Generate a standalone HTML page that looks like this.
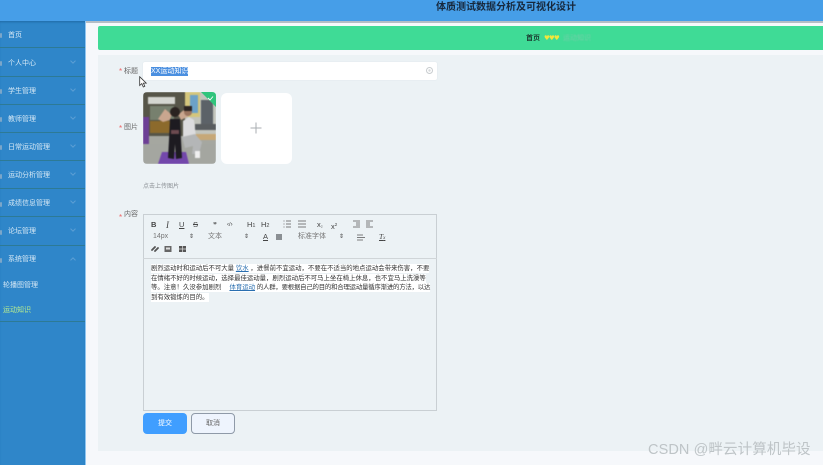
<!DOCTYPE html>
<html lang="zh">
<head>
<meta charset="utf-8">
<title>体质测试数据分析及可视化设计</title>
<style>
html,body{margin:0;padding:0}
body{width:823px;height:465px;overflow:hidden;position:relative;background:#f6f8fb;font-family:"Liberation Sans","Noto Sans CJK SC",sans-serif;color:#555}
.a{position:absolute;white-space:nowrap}
#top{left:0;top:0;width:823px;height:21px;background:#469ee8;border-bottom:2px solid #b4bec6}
#title{left:0;top:1px;width:1012px;text-align:center;font-size:10px;line-height:13px;font-weight:bold;color:#17283c;filter:blur(.2px)}
#side{left:0;top:21px;width:85px;height:444px;background:#2f86c9;border-right:1px solid #8fc6f2;box-shadow:inset 0 2px 2px -1px #1f6aa5}
.mi{left:0;width:85px;height:1px;background:#2d7a95}
.mt{left:8px;margin-top:1px;font-size:7px;line-height:10px;color:#d6e8f5;filter:blur(.35px)}
.ic{left:0;width:2px;height:5px;background:#7ba6c9;border-radius:1px;filter:blur(.3px)}
.ch{left:71px;width:3px;height:3px;border-right:1px solid #5b9fd4;border-bottom:1px solid #5b9fd4;transform:rotate(45deg);filter:blur(.2px)}
.ch.up{transform:rotate(225deg)}
#green{left:98px;top:26px;width:725px;height:24px;background:#3fdb96;border-radius:2px 0 0 2px}
#card{left:98px;top:55px;width:725px;height:396px;background:#ecf2f5}
.lb{margin-top:1px;font-size:7px;line-height:10px;color:#666;filter:blur(.3px)}
.st{color:#e66;font-size:8px;line-height:10px;filter:blur(.2px)}
#inp{left:143px;top:62px;width:294px;height:18px;background:#fff;border-radius:2px;box-shadow:0 0 1px #d5dde2}
#sel{left:151px;top:67px;height:9px;background:#4a8fe0;color:#fff;font-size:7px;line-height:9px;filter:blur(.3px)}
#photo{left:143px;top:92px;width:73px;height:72px;border-radius:4px;overflow:hidden}
#photo svg{display:block;filter:blur(.6px)}
#plus{left:221px;top:93px;width:71px;height:71px;background:#fff;border-radius:6px}
#editor{left:143px;top:214px;width:294px;height:197px;border:1px solid #c9cfd3;box-sizing:border-box}
#tbar{left:143px;top:258px;width:294px;height:1px;background:#d0d5d8}
.tb{margin-top:1px;font-size:7.5px;line-height:10px;color:#444;filter:blur(.25px)}
.t2{color:#777;font-size:7px}
.ln{left:151px;font-size:6.4px;line-height:9px;height:9px;color:#333;background:#fff;filter:blur(.3px)}
.ln u{color:#2a6fb0}
#ok{left:143px;top:413px;width:44px;height:21px;background:#409eff;border-radius:4px;color:#fff;font-size:7px;line-height:21px;text-align:center;filter:blur(.2px)}
#no{left:191px;top:413px;width:44px;height:21px;box-sizing:border-box;background:#eef4fd;border:1px solid #8f9aa8;border-radius:4px;color:#666;font-size:7px;line-height:19px;text-align:center}
#wm{left:648px;top:442px;font-size:14.5px;line-height:17px;color:#bec4c7;letter-spacing:.1px}
</style>
</head>
<body>
<div class="a" id="top"></div>
<div class="a" id="title">体质测试数据分析及可视化设计</div>

<div class="a" id="side"></div>
<div class="a mi" style="top:47px"></div>
<div class="a mi" style="top:76px"></div>
<div class="a mi" style="top:104px"></div>
<div class="a mi" style="top:132px"></div>
<div class="a mi" style="top:160px"></div>
<div class="a mi" style="top:188px"></div>
<div class="a mi" style="top:216px"></div>
<div class="a mi" style="top:245px"></div>
<div class="a mi" style="top:321px"></div>
<div class="a ic" style="top:33px"></div>
<div class="a ic" style="top:61px"></div>
<div class="a ic" style="top:89px"></div>
<div class="a ic" style="top:117px"></div>
<div class="a ic" style="top:145px"></div>
<div class="a ic" style="top:174px"></div>
<div class="a ic" style="top:202px"></div>
<div class="a ic" style="top:230px"></div>
<div class="a ic" style="top:258px"></div>
<div class="a mt" style="top:30px">首页</div>
<div class="a mt" style="top:58px">个人中心</div>
<div class="a mt" style="top:86px">学生管理</div>
<div class="a mt" style="top:114px">教师管理</div>
<div class="a mt" style="top:142px">日常运动管理</div>
<div class="a mt" style="top:170px">运动分析管理</div>
<div class="a mt" style="top:198px">成绩信息管理</div>
<div class="a mt" style="top:226px">论坛管理</div>
<div class="a mt" style="top:254px">系统管理</div>
<div class="a mt" style="top:280px;left:3px">轮播图管理</div>
<div class="a mt" style="top:305px;left:3px;color:#b9ee8f">运动知识</div>
<div class="a ch" style="top:59px"></div>
<div class="a ch" style="top:87px"></div>
<div class="a ch" style="top:115px"></div>
<div class="a ch" style="top:143px"></div>
<div class="a ch" style="top:171px"></div>
<div class="a ch" style="top:199px"></div>
<div class="a ch" style="top:227px"></div>
<div class="a ch up" style="top:258px"></div>

<div class="a" id="green"></div>
<div class="a" style="left:526px;top:34px;font-size:7px;line-height:10px;color:#1c3a30;font-weight:bold">首页</div>
<div class="a" style="left:544px;top:34px;font-size:6.5px;line-height:8px;color:#f3e63c;letter-spacing:-.9px;font-family:'DejaVu Sans',sans-serif">♥♥♥</div>
<div class="a" style="left:563px;top:34px;font-size:7px;line-height:10px;color:#72cfa8;filter:blur(.4px)">运动知识</div>

<div class="a" id="card"></div>

<div class="a st" style="left:119px;top:67px">*</div>
<div class="a lb" style="left:124px;top:66px">标题</div>
<div class="a" id="inp"></div>
<div class="a" id="sel">XX运动知识</div>
<svg class="a" style="left:425px;top:66px" width="9" height="9" viewBox="0 0 9 9"><circle cx="4.5" cy="4.5" r="3" fill="none" stroke="#c8cccf"/><circle cx="4.5" cy="4.5" r="1.2" fill="#d5d8da"/></svg>
<svg class="a" style="left:139px;top:76px" width="9" height="12" viewBox="0 0 9 12"><path d="M.7.7V9.5L2.8 7.6 4.3 11 5.8 10.3 4.4 7.1H7.2Z" fill="#fff" stroke="#333" stroke-width=".8"/></svg>

<div class="a st" style="left:119px;top:124px">*</div>
<div class="a lb" style="left:124px;top:122px">图片</div>
<div class="a" id="photo">
<svg width="73" height="72" viewBox="0 0 73 72">
<rect width="73" height="72" fill="#a5a7a0"/>
<rect width="42" height="44" fill="#565548"/>
<rect x="5" y="5" width="27" height="7" fill="#d4d6d0"/>
<rect x="7" y="14" width="24" height="14" fill="#77806e"/>
<rect x="42" width="31" height="44" fill="#c2c4bc"/>
<rect x="42" width="15" height="25" fill="#d4c67c"/>
<rect x="47" y="3" width="8" height="18" fill="#6ca2c8"/>
<rect x="58" y="8" width="12" height="24" fill="#5c6268"/>
<rect x="52" y="32" width="21" height="6" fill="#595d60"/>
<rect x="52" y="42" width="21" height="6" fill="#c6a878"/>
<rect x="7" y="29" width="20" height="12" fill="#8c6a2c"/>
<rect y="25" width="6" height="33" fill="#6d3f95"/>
<rect y="52" width="73" height="20" fill="#a4a6a0"/>
<path d="M15 72 19 60H43L46 72Z" fill="#7347ab"/>
<path d="M15 27 22 17 28 22 36 22 42 17 46 24 38 28 36 24H28L27 28 20 30Z" fill="#c9a68f"/>
<circle cx="32" cy="20" r="5" fill="#2a2320"/>
<path d="M27 27H37L38 48 39 66 33 67 32 52 31 67 25 66 26 48Z" fill="#1d1b21"/>
<rect x="28" y="38" width="8" height="4" fill="#6c4a50"/>
<path d="M40 29 46 25 51 28 53 45 46 47 40 46Z" fill="#dcdcde"/>
<circle cx="45" cy="20" r="4" fill="#9b7560"/>
<path d="M41 14H49V19H41Z" fill="#2c2422"/>
<path d="M39 45 52 42 59 50 56 62 49 62 50 54 42 56Z" fill="#b4b6b7"/>
<rect x="52" y="59" width="5" height="7" fill="#f0f0f0"/>
</svg>
</div>
<svg class="a" style="left:195px;top:92px" width="21" height="21" viewBox="0 0 21 21"><path d="M6 0H17Q21 0 21 4V15Z" fill="#30c47c"/><path d="M13 6 15 8 18 4.500" fill="none" stroke="#fff" stroke-width=".9"/></svg>
<div class="a" id="plus"></div>
<svg class="a" style="left:250px;top:122px" width="12" height="12" viewBox="0 0 12 12"><path d="M6 .5V11.500M.5 6H11.500" stroke="#a9adb2" stroke-width="1"/></svg>
<div class="a lb" style="left:143px;top:181px;font-size:6px;color:#8a8f94">点击上传图片</div>

<div class="a st" style="left:119px;top:213px">*</div>
<div class="a lb" style="left:124px;top:209px">内容</div>
<div class="a" id="editor"></div>
<div class="a" id="tbar"></div>

<div class="a tb" style="left:151px;top:219px;font-weight:bold">B</div>
<div class="a tb" style="left:166px;top:219px;font-style:italic;font-family:'Liberation Serif',serif;font-size:9px">I</div>
<div class="a tb" style="left:179px;top:219px;text-decoration:underline">U</div>
<div class="a tb" style="left:193px;top:219px;text-decoration:line-through">S</div>
<div class="a tb" style="left:213px;top:219px;font-weight:bold;font-family:'DejaVu Sans',sans-serif;font-size:6.500px">❞</div>
<div class="a tb" style="left:227px;top:219px;font-size:6px">‹/›</div>
<div class="a tb" style="left:247px;top:219px">H<span style="font-size:5.500px">1</span></div>
<div class="a tb" style="left:261px;top:219px">H<span style="font-size:5.500px">2</span></div>
<svg class="a" style="left:283px;top:220px" width="24" height="8" viewBox="0 0 24 8"><path d="M3 1H8M3 4H8M3 7H8M15 1H23M15 4H23M15 7H23M.5 1H1.500M.5 4H1.500M.5 7H1.500" stroke="#555" stroke-width=".8"/></svg>
<div class="a tb" style="left:317px;top:219px">x<span style="font-size:5px">₂</span></div>
<div class="a tb" style="left:331px;top:219px">x<span style="font-size:4.500px;vertical-align:3px">2</span></div>
<svg class="a" style="left:353px;top:220px" width="22" height="8" viewBox="0 0 22 8"><path d="M0 1H7M3 3H7M3 5H7M0 7H7M13 1H20M13 3H17M13 5H17M13 7H20" stroke="#555" stroke-width=".8"/></svg>
<div class="a tb t2" style="left:153px;top:231px">14px</div>
<div class="a tb" style="left:189px;top:231px;font-size:6px">⇕</div>
<div class="a tb t2" style="left:208px;top:231px">文本</div>
<div class="a tb" style="left:244px;top:231px;font-size:6px">⇕</div>
<div class="a tb" style="left:263px;top:231px;text-decoration:underline">A</div>
<div class="a" style="left:276px;top:234px;width:6px;height:6px;background:#8a8f93"></div>
<div class="a tb t2" style="left:298px;top:231px">标准字体</div>
<div class="a tb" style="left:339px;top:231px;font-size:6px">⇕</div>
<svg class="a" style="left:357px;top:234px" width="8" height="7" viewBox="0 0 8 7"><path d="M0 1H6M0 3.500H8M0 6H6" stroke="#555" stroke-width=".8"/></svg>
<div class="a tb" style="left:379px;top:231px;font-family:'Liberation Serif',serif;font-style:italic;text-decoration:underline">T<span style="font-size:5px">x</span></div>
<svg class="a" style="left:151px;top:245px" width="38" height="8" viewBox="0 0 38 8"><path d="M1 5 4 2M4 6 7 3" stroke="#555" stroke-width="1.800" stroke-linecap="round"/><rect x="13.500" y="1" width="7" height="6" fill="#666"/><rect x="15" y="2.500" width="4" height="2" fill="#ddd"/><rect x="28" y="1" width="7" height="6" fill="#555"/><path d="M28 4H35M31.500 1V7" stroke="#ddd" stroke-width=".7"/></svg>

<div class="a ln" style="top:264px">剧烈运动时和运动后不可大量 <u>饮水</u> ，进餐前不宜运动，不要在不适当的地点运动会带来伤害，不要</div>
<div class="a ln" style="top:273.500px">在情绪不好的时候运动，选择最佳运动量，剧烈运动后不可马上坐在椅上休息，也不宜马上洗澡等</div>
<div class="a ln" style="top:283px">等。注意！久没参加剧烈　 <u>体育运动</u> <span style="letter-spacing:-.2px">的人群，要根据自己的目的和合理运动量循序渐进的方法，以达</span></div>
<div class="a ln" style="top:292.500px">到有效锻炼的目的。</div>

<div class="a" id="ok">提交</div>
<div class="a" id="no">取消</div>

<div class="a" id="wm">CSDN @畔云计算机毕设</div>
</body>
</html>
